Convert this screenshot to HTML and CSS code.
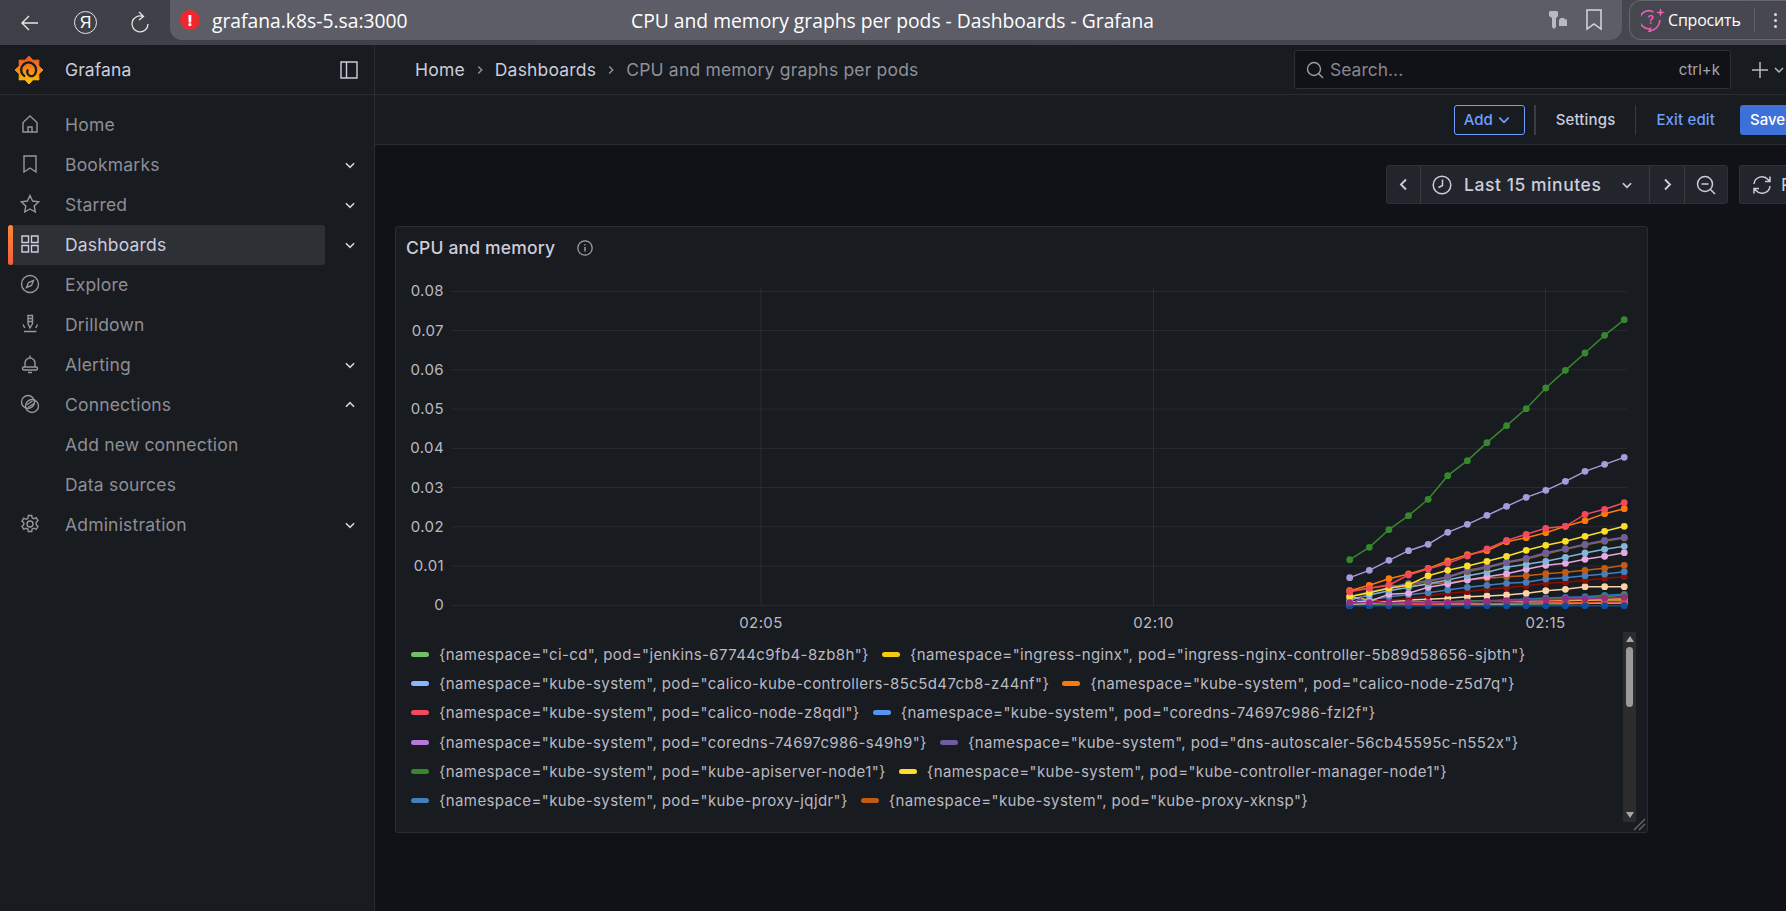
FILE: index.html
```html
<!DOCTYPE html>
<html lang="en">
  <head>
    <meta charset="UTF-8" />
    <title>CPU and memory graphs per pods - Dashboards - Grafana</title>
    <link rel="stylesheet" href="styles.css">
  </head>
  <body>
    <div class="browser-bar">
      <div class="browser-nav">
        <svg class="ic-back" width="22" height="22" viewBox="0 0 22 22"><path d="M19 11H3M10 4l-7 7 7 7" fill="none" stroke="#e6e6ea" stroke-width="1.4"/></svg>
        <span class="ya-mark">Я</span>
        <svg class="ic-reload" width="22" height="24" viewBox="0 0 22 24"><path d="M14 5.500a8 8 0 1 0 5 7.500M10 1l4.500 4.500L10 9" fill="none" stroke="#e6e6ea" stroke-width="1.3"/></svg>
      </div>
      <div class="address-bar">
        <span class="alert-dot">!</span>
        <span class="url">grafana.k8s-5.sa:3000</span>
        <span class="page-title">CPU and memory graphs per pods - Dashboards - Grafana</span>
        <svg class="ic-key" width="20" height="20" viewBox="0 0 20 20"><path d="M1 2.500Q1 1 2.500 1h6Q10 1 10 2.500V6L8 8v9l-2 2-2-2V8L1 6z" fill="#b9bac0"/><path d="M11 10l1.500-2H16l1 1.500h2V16h-8z" fill="#b9bac0"/></svg>
        <svg class="ic-mark" width="18" height="22" viewBox="0 0 18 22"><path d="M2 1h14v19l-7-5-7 5z" fill="none" stroke="#d6d6da" stroke-width="1.5"/></svg>
      </div>
      <div class="ask-box">
        <svg class="ask-icon" width="24" height="24" viewBox="0 0 24 24"><path d="M12.500 4a9 9 0 1 0-3 16.500L8 23.500c6-1.500 10.500-5.500 11-11.500" fill="none" stroke="#e85fb4" stroke-width="1.600"/><text x="6.500" y="16" class="ask-q">?</text><path d="M19.500 0l1.100 3.400 3.400 1.100-3.400 1.100-1.100 3.400-1.100-3.400-3.400-1.100 3.400-1.100z" fill="#e85fb4"/></svg>
        <span class="ask-text">Спросить</span>
        <span class="ask-sep"></span>
        <span class="ask-dots"><i></i><i></i><i></i></span>
      </div>
    </div>

    <div class="app">
      <div class="sidebar">
        <div class="side-head">
          <svg class="logo" width="30" height="30" viewBox="0 0 30 30">
            <defs><linearGradient id="logoGrad" x1="0" y1="0" x2="0" y2="1"><stop offset="0" stop-color="#ee4f27"/><stop offset="1" stop-color="#fcc30b"/></linearGradient></defs>
            <path d="M15 1L19 5.300 24.900 5.100 24.700 11 29 15 24.700 19 24.900 24.900 19 24.700 15 29 11 24.700 5.100 24.900 5.300 19 1 15 5.300 11 5.100 5.100 11 5.300z" fill="url(#logoGrad)" stroke="url(#logoGrad)" stroke-width="1" stroke-linejoin="round"/>
            <path d="M11 21.500a7.500 7.500 0 1 1 10.500-3.500 4.200 4.200 0 1 1-7.500-3.500" fill="none" stroke="#181b1f" stroke-width="2.300"/>
          </svg>
          <span class="brand">Grafana</span>
          <svg class="dock" width="18" height="18" viewBox="0 0 18 18"><path d="M1 1h16v16H1zM6.500 1v16" fill="none" stroke="#ccccdc" stroke-width="1.400"/></svg>
        </div>
        <div class="nav">
          <div class="nav-row"><a class="nav-link"><svg class="ni" viewBox="0 0 20 20"><path d="M3 18V8.500L10 2l7 6.500V18zM8 18v-5h4v5"/></svg>Home</a></div>
          <div class="nav-row"><a class="nav-link"><svg class="ni" viewBox="0 0 20 20"><path d="M4 2h12v16l-6-4-6 4z"/></svg>Bookmarks</a><svg class="chev" viewBox="0 0 12 12"><path d="M2.500 4.500L6 8l3.500-3.500"/></svg></div>
          <div class="nav-row"><a class="nav-link"><svg class="ni" viewBox="0 0 20 20"><path d="M10 1.500l2.600 5.500 6 .8-4.400 4.200 1.100 6L10 15l-5.300 3 1.100-6L1.400 7.800l6-.8z"/></svg>Starred</a><svg class="chev" viewBox="0 0 12 12"><path d="M2.500 4.500L6 8l3.500-3.500"/></svg></div>
          <div class="nav-row"><a class="nav-link active"><svg class="ni" viewBox="0 0 20 20"><path d="M2 2h6.500v6.500H2zM11.500 2H18v6.500h-6.500zM2 11.500h6.500V18H2zM11.500 11.500H18V18h-6.500z"/></svg>Dashboards</a><svg class="chev" viewBox="0 0 12 12"><path d="M2.500 4.500L6 8l3.500-3.500"/></svg></div>
          <div class="nav-row"><a class="nav-link"><svg class="ni" viewBox="0 0 20 20"><circle cx="10" cy="10" r="8.500"/><path d="M13.500 6.500l-2 5-5 2 2-5z"/></svg>Explore</a></div>
          <div class="nav-row"><a class="nav-link"><svg class="ni" viewBox="0 0 20 20"><path d="M8 1.500h4.500v8L10 14 8 9.500zM8 4.500h4.500M8 7.500h4.500M3 10.500l1.800 3.500M17.500 10.500L15.700 14M4 17.500h12.500"/></svg>Drilldown</a></div>
          <div class="nav-row"><a class="nav-link"><svg class="ni" viewBox="0 0 20 20"><path d="M10 1.500v2M5 9a5 5 0 0 1 10 0v4H5zM5 13H4a1.500 1.500 0 0 0 0 3h12a1.500 1.500 0 0 0 0-3h-1M8 18.500h4"/></svg>Alerting</a><svg class="chev" viewBox="0 0 12 12"><path d="M2.500 4.500L6 8l3.500-3.500"/></svg></div>
          <div class="nav-row"><a class="nav-link"><svg class="ni" viewBox="0 0 20 20"><circle cx="8" cy="8" r="6.500"/><circle cx="12" cy="12" r="6.500"/><path d="M6.500 11l6-4M8 13.500l6-4"/></svg>Connections</a><svg class="chev" viewBox="0 0 12 12"><path d="M2.500 7.500L6 4l3.500 3.500"/></svg></div>
          <div class="nav-row"><a class="nav-link nav-sub">Add new connection</a></div>
          <div class="nav-row"><a class="nav-link nav-sub">Data sources</a></div>
          <div class="nav-row"><a class="nav-link"><svg class="ni" viewBox="0 0 20 20"><circle cx="10" cy="10" r="3"/><path d="M8.300 1.500h3.400l.5 2.500 1.700.8 2.300-1.100 1.800 2.900-1.800 1.700v2.400l1.800 1.700-1.800 2.900-2.300-1.100-1.700.8-.5 2.500H8.300l-.5-2.500-1.700-.8-2.300 1.100-1.800-2.900 1.800-1.700V8.800L2 7.100l1.800-2.900 2.300 1.100 1.700-.8z"/></svg>Administration</a><svg class="chev" viewBox="0 0 12 12"><path d="M2.500 4.500L6 8l3.500-3.500"/></svg></div>
        </div>
      </div>

      <div class="main">
        <div class="topbar">
          <div class="crumbs">
            <span>Home</span><svg class="crumb-sep" viewBox="0 0 12 12"><path d="M4.500 3l3 3-3 3"/></svg>
            <span>Dashboards</span><svg class="crumb-sep" viewBox="0 0 12 12"><path d="M4.500 3l3 3-3 3"/></svg>
            <span class="crumb-last">CPU and memory graphs per pods</span>
          </div>
          <div class="search">
            <svg width="18" height="18" viewBox="0 0 18 18"><circle cx="8" cy="8" r="6.500" fill="none" stroke="#9a9ba3" stroke-width="1.400"/><path d="M12.500 12.500L17 17" stroke="#9a9ba3" stroke-width="1.400"/></svg>
            <span class="search-text">Search...</span>
            <span class="search-key">ctrl+k</span>
          </div>
          <div class="plus-box">
            <svg width="16" height="16" viewBox="0 0 16 16"><path d="M8 0v16M0 8h16" stroke="#b9bac4" stroke-width="1.500"/></svg>
            <svg class="plus-chev" viewBox="0 0 12 12"><path d="M2 4l4 4 4-4"/></svg>
          </div>
        </div>

        <div class="toolbar">
          <button class="btn-add">Add<svg viewBox="0 0 12 12"><path d="M2 4l4 4 4-4"/></svg></button>
          <span class="tool-sep tool-sep-wide"></span>
          <span class="tool-link">Settings</span>
          <span class="tool-sep"></span>
          <span class="tool-link tool-blue">Exit edit</span>
          <button class="btn-save">Save</button>
        </div>

        <div class="content">
          <div class="timebar">
            <div class="time-group">
              <span class="time-cell time-narrow"><svg class="time-chev" viewBox="0 0 12 12"><path d="M8 2L4 6l4 4"/></svg></span>
              <span class="time-cell time-range">
                <svg width="20" height="20" viewBox="0 0 20 20"><circle cx="10" cy="10" r="8.800" fill="none" stroke="#ccccdc" stroke-width="1.500"/><path d="M10.500 4.500V10.500L6.500 12.500" fill="none" stroke="#ccccdc" stroke-width="1.500"/></svg>
                <span class="time-text">Last 15 minutes</span>
                <svg class="time-chev time-down" viewBox="0 0 12 12"><path d="M2.500 4.500L6 8l3.500-3.500"/></svg>
              </span>
              <span class="time-cell time-next"><svg class="time-chev" viewBox="0 0 12 12"><path d="M4 2l4 4-4 4"/></svg></span>
              <span class="time-cell time-zoom"><svg width="20" height="20" viewBox="0 0 20 20"><circle cx="9" cy="9" r="7.500" fill="none" stroke="#ccccdc" stroke-width="1.500"/><path d="M14.500 14.500L19 19M5.500 9h7" stroke="#ccccdc" stroke-width="1.500"/></svg></span>
            </div>
            <div class="refresh">
              <svg width="20" height="20" viewBox="0 0 20 20"><path d="M2 9a8 8 0 0 1 14-4.500L18 6.500M18 1.500v5h-5M18 11a8 8 0 0 1-14 4.500L2 13.500M2 18.500v-5h5" fill="none" stroke="#ccccdc" stroke-width="1.500"/></svg>
              <span>Refresh</span>
            </div>
          </div>

          <div class="panel">
            <div class="panel-head">
              <span class="panel-title">CPU and memory</span>
              <svg width="16" height="16" viewBox="0 0 16 16"><circle cx="8" cy="8" r="7.200" fill="none" stroke="#a5a6ae" stroke-width="1.200"/><path d="M8 7v4.500M8 4.200v1.300" stroke="#a5a6ae" stroke-width="1.400"/></svg>
            </div>
            <svg id="chart" class="chart" viewBox="396 268 1251 362" width="1251" height="362"></svg>
            <div class="legend-wrap">
              <div class="legend">
                <div class="leg"><i class="sw" style="background:#73bf69"></i>{namespace="ci-cd", pod="jenkins-67744c9fb4-8zb8h"}</div>
                <div class="leg"><i class="sw" style="background:#f2cc0c"></i>{namespace="ingress-nginx", pod="ingress-nginx-controller-5b89d58656-sjbth"}</div>
                <div class="leg"><i class="sw" style="background:#8ab8ff"></i>{namespace="kube-system", pod="calico-kube-controllers-85c5d47cb8-z44nf"}</div>
                <div class="leg"><i class="sw" style="background:#ff780a"></i>{namespace="kube-system", pod="calico-node-z5d7q"}</div>
                <div class="leg"><i class="sw" style="background:#f2495c"></i>{namespace="kube-system", pod="calico-node-z8qdl"}</div>
                <div class="leg"><i class="sw" style="background:#5794f2"></i>{namespace="kube-system", pod="coredns-74697c986-fzl2f"}</div>
                <div class="leg"><i class="sw" style="background:#b877d9"></i>{namespace="kube-system", pod="coredns-74697c986-s49h9"}</div>
                <div class="leg"><i class="sw" style="background:#705da0"></i>{namespace="kube-system", pod="dns-autoscaler-56cb45595c-n552x"}</div>
                <div class="leg"><i class="sw" style="background:#37872d"></i>{namespace="kube-system", pod="kube-apiserver-node1"}</div>
                <div class="leg"><i class="sw" style="background:#fade2a"></i>{namespace="kube-system", pod="kube-controller-manager-node1"}</div>
                <div class="leg"><i class="sw" style="background:#447ebc"></i>{namespace="kube-system", pod="kube-proxy-jqjdr"}</div>
                <div class="leg"><i class="sw" style="background:#c15c17"></i>{namespace="kube-system", pod="kube-proxy-xknsp"}</div>
              </div>
              <div class="legend-scroll">
                <span class="arrow-up"></span>
                <span class="thumb"></span>
                <span class="arrow-down"></span>
              </div>
            </div>
            <svg class="resize" width="13" height="13" viewBox="0 0 13 13"><path d="M1 12L12 1M6 12l6-6" stroke="#6a6b72" stroke-width="1.200"/></svg>
          </div>
        </div>
      </div>
    </div>
    <script src="chart.js"></script>
  </body>
</html>
```

FILE: styles.css
```css
* {
  box-sizing: border-box;
}

html,
body {
  margin: 0px;
  height: 100%;
  overflow: hidden;
  background-color: #111217;
  font-family: Inter, "Noto Sans", sans-serif;
  color: #ccccdc;
}

/* browser chrome */
.browser-bar {
  display: flex;
  height: 45px;
  background: linear-gradient(90deg, #3f4047, #46474f);
  color: #fff;
}

.browser-nav {
  display: flex;
  align-items: center;
  width: 170px;
  padding-left: 19px;
}

.ic-reload {
  margin-left: 32px;
}

.ya-mark {
  display: flex;
  align-items: center;
  justify-content: center;
  width: 23px;
  height: 23px;
  margin-left: 33px;
  border: 1.4px solid #e6e6ea;
  border-radius: 50%;
  font-size: 16px;
  font-family: "Liberation Sans", sans-serif;
}

.address-bar {
  position: relative;
  display: flex;
  align-items: center;
  width: 1452px;
  height: 40px;
  padding-left: 10px;
  background-color: #5c5d66;
  border-radius: 0px 0px 12px 12px;
}

.alert-dot {
  display: flex;
  align-items: center;
  justify-content: center;
  width: 20px;
  height: 20px;
  background-color: #f0282d;
  border-radius: 50%;
  font-size: 15px;
  font-weight: 800;
  color: #fff;
}

.url {
  margin-left: 12px;
  font-family: "Open Sans", sans-serif;
  font-size: 19.3px;
}

.page-title {
  position: absolute;
  left: 461px;
  font-family: "Open Sans", sans-serif;
  font-size: 19.3px;
}

.ic-key {
  margin-left: auto;
}

.ic-mark {
  margin-left: 17px;
  margin-right: 19px;
}

.ask-box {
  display: flex;
  align-items: center;
  flex: 1;
  height: 40px;
  margin-left: 7px;
  padding-left: 11px;
  border: 1px solid #65666e;
  border-right: 0px;
  border-radius: 12px 0px 0px 12px;
}

.ask-q {
  font-family: Inter, sans-serif;
  font-size: 12px;
  font-weight: 600;
  fill: #e85fb4;
}

.ask-text {
  margin-left: 3px;
  font-family: "Open Sans", sans-serif;
  font-size: 16px;
  letter-spacing: -0.2px;
}

.ask-sep {
  width: 1px;
  height: 24px;
  margin-left: 13px;
  background-color: #5f6068;
}

.ask-dots {
  display: flex;
  flex-direction: column;
  gap: 3px;
  margin-left: 19px;
}

.ask-dots i {
  width: 3px;
  height: 3px;
  background-color: #dcdce0;
  border-radius: 50%;
}

/* grafana shell */
.app {
  display: flex;
  height: 866px;
}

.sidebar {
  width: 375px;
  flex-shrink: 0;
  background-color: #181b1f;
  border-right: 1px solid #2a2c32;
}

.side-head {
  display: flex;
  align-items: center;
  height: 50px;
  padding-left: 14px;
  border-bottom: 1px solid #2a2c32;
}

.brand {
  margin-left: 21px;
  font-size: 17.5px;
  letter-spacing: 0.1px;
}

.dock {
  margin-left: auto;
  margin-right: 16px;
}

.nav {
  padding-top: 10px;
}

.nav-row {
  display: flex;
  align-items: center;
  height: 40px;
  padding-left: 8px;
}

.nav-link {
  position: relative;
  display: flex;
  align-items: center;
  gap: 25px;
  width: 317px;
  height: 40px;
  padding-left: 12px;
  padding-bottom: 2px;
  font-size: 17.5px;
  letter-spacing: 0.19px;
  color: #8d8e96;
}

.nav-link.active {
  background-color: #2d3035;
  border-radius: 3px;
  color: #ccccdc;
}

.nav-link.active::before {
  content: "";
  position: absolute;
  left: 0px;
  top: 0px;
  width: 5px;
  height: 40px;
  background: linear-gradient(0deg, #f55f3e, #ff8833);
  border-radius: 3px;
}

.nav-sub {
  padding-left: 57px;
}

.ni {
  width: 20px;
  height: 20px;
  flex-shrink: 0;
  fill: none;
  stroke: #9597a0;
  stroke-width: 1.4;
}

.active .ni {
  stroke: #ccccdc;
}

.chev {
  width: 14px;
  height: 14px;
  margin-left: 18px;
  fill: none;
  stroke: #ccccdc;
  stroke-width: 1.500;
}

.main {
  flex: 1;
  min-width: 0;
  overflow: hidden;
}

.topbar {
  display: flex;
  align-items: center;
  height: 50px;
  padding-left: 40px;
  background-color: #181b1f;
  border-bottom: 1px solid #2a2c32;
}

.crumbs {
  display: flex;
  align-items: center;
  font-size: 17.5px;
  letter-spacing: 0.19px;
}

.crumb-sep {
  width: 14px;
  height: 14px;
  margin: 0px 8px;
  fill: none;
  stroke: #8d8e96;
  stroke-width: 1.300;
}

.crumb-last {
  color: #8f9098;
}

.search {
  display: flex;
  align-items: center;
  width: 437px;
  height: 39px;
  margin-left: auto;
  padding: 0px 10px 0px 11px;
  background-color: #111217;
  border: 1px solid #2e3037;
  border-radius: 3px;
}

.search-text {
  margin-left: 6px;
  font-size: 17.5px;
  color: #85868e;
}

.search-key {
  margin-left: auto;
  font-size: 15px;
  color: #a5a6ae;
}

.plus-box {
  display: flex;
  align-items: center;
  width: 55px;
  padding-left: 21px;
}

.plus-chev {
  width: 12px;
  height: 12px;
  margin-left: 5px;
  fill: none;
  stroke: #b9bac4;
  stroke-width: 1.400;
}

.toolbar {
  display: flex;
  align-items: center;
  justify-content: flex-end;
  height: 50px;
  background-color: #181b1f;
  border-bottom: 1px solid #2a2c32;
  font-size: 15px;
  font-weight: 500;
  letter-spacing: 0.15px;
}

.btn-add {
  display: flex;
  align-items: center;
  gap: 4px;
  width: 71px;
  height: 30px;
  padding-left: 9px;
  background: none;
  border: 1px solid #6e9fff;
  border-radius: 3px;
  font-family: inherit;
  font-size: 15px;
  font-weight: 500;
  color: #6e9fff;
}

.btn-add svg {
  width: 14px;
  height: 14px;
  fill: none;
  stroke: #6e9fff;
  stroke-width: 1.500;
}

.tool-sep {
  width: 1px;
  height: 30px;
  margin: 0px 20px;
  background-color: #3a3c42;
}

.tool-sep-wide {
  width: 2px;
  margin: 0px 20px 0px 9px;
}

.tool-blue {
  color: #6e9fff;
}

.btn-save {
  width: 46px;
  height: 30px;
  margin-left: 25px;
  padding: 0px 0px 0px 10px;
  background-color: #3d71d9;
  border: none;
  border-radius: 3px 0px 0px 3px;
  font-family: inherit;
  font-size: 15px;
  font-weight: 500;
  color: #fff;
  text-align: left;
  overflow: hidden;
}

.content {
  padding-top: 20px;
}

.timebar {
  display: flex;
  height: 39px;
  padding-left: 1011px;
}

.time-group {
  display: flex;
  width: 342px;
  background-color: #22252b;
  border: 1px solid #2e3037;
  border-radius: 3px;
}

.time-cell {
  display: flex;
  align-items: center;
  justify-content: center;
  border-right: 1px solid #3a3c42;
}

.time-narrow {
  width: 34px;
}

.time-range {
  width: 229px;
  justify-content: flex-start;
  padding-left: 11px;
}

.time-next {
  width: 35px;
}

.time-zoom {
  width: 42px;
  border-right: 0px;
}

.time-text {
  margin-left: 12px;
  font-size: 17.5px;
  font-weight: 500;
  letter-spacing: 0.55px;
}

.time-chev {
  width: 15px;
  height: 15px;
  fill: none;
  stroke: #ccccdc;
  stroke-width: 1.500;
}

.time-down {
  margin-left: 19px;
  width: 14px;
  height: 14px;
}

.refresh {
  display: flex;
  align-items: center;
  gap: 9px;
  width: 48px;
  margin-left: 11px;
  padding-left: 12px;
  background-color: #22252b;
  border: 1px solid #2e3037;
  border-right: 0px;
  border-radius: 3px 0px 0px 3px;
  font-size: 17.5px;
  overflow: hidden;
  flex-shrink: 0;
}

.refresh svg {
  flex-shrink: 0;
}

.panel {
  position: relative;
  width: 1253px;
  height: 607px;
  margin-top: 22px;
  margin-left: 20px;
  background-color: #181b1f;
  border: 1px solid #2a2c32;
  border-radius: 3px;
}

.panel-head {
  display: flex;
  align-items: center;
  gap: 22px;
  height: 41px;
  padding-left: 10px;
}

.panel-title {
  font-size: 17.5px;
  font-weight: 500;
  letter-spacing: 0.18px;
}

.chart {
  display: block;
}

.axis-text {
  font-family: Inter, sans-serif;
  font-size: 15px;
  letter-spacing: 0.4px;
  fill: #b9bac4;
}

.legend-wrap {
  display: flex;
  height: 190px;
  margin-top: 2px;
}

.legend {
  display: flex;
  flex-wrap: wrap;
  align-content: flex-start;
  column-gap: 13px;
  width: 1227px;
  padding-top: 8px;
  padding-left: 15px;
}

.leg {
  display: flex;
  align-items: center;
  height: 29.2px;
  font-size: 15px;
  letter-spacing: 0.39px;
  color: #b9bac4;
  white-space: nowrap;
}

.sw {
  width: 18px;
  height: 5px;
  margin-right: 10px;
  border-radius: 3px;
}

.legend-scroll {
  display: flex;
  flex-direction: column;
  align-items: center;
  width: 13px;
  background-color: #2c2c2c;
}

.arrow-up,
.arrow-down {
  width: 0px;
  height: 0px;
  border-left: 4.500px solid transparent;
  border-right: 4.500px solid transparent;
}

.arrow-up {
  margin-top: 4px;
  border-bottom: 6px solid #a8a8a8;
}

.arrow-down {
  margin-top: 105px;
  border-top: 6px solid #a8a8a8;
}

.thumb {
  width: 7px;
  height: 60px;
  margin-top: 5px;
  background-color: #9b9b9b;
  border-radius: 4px;
}

.resize {
  position: absolute;
  right: 1px;
  bottom: 1px;
}
```

FILE: chart.js
```js
// values are y pixels read off a 3x crop starting at y=400
const xs = [];
for (let i = 0; i < 15; i++) xs.push(1349.7 + i * 19.61);

const series = [
  ["#7eb26d", [616,616,615,615,614,614,613,613,612,612,611,611,610,610,609]],
  ["#eab839", [590,600,606,606,605,605,604,604,603,603,602,602,601,600,600]],
  ["#6ed0e0", [616,615,614,613,613,612,612,611,611,610,610,609,609,608,608]],
  ["#ef843c", [614,612,610,609,608,606,605,604,603,602,601,600,598,597,596]],
  ["#e24d42", [616,615,614,614,613,612,612,611,610,610,609,608,608,607,606]],
  ["#1f78c1", [615,614,612,610,608,606,604,602,600,597,594,592,590,586,583]],
  ["#508642", [616,615,613,610,608,606,604,603,602,600,598,596,594,590,586]],
  ["#fcd2a6", [612,610,605,600,598,595,590,588,585,580,572,568,560,560,560]],
  ["#890f02", [610,605,600,598,587,580,575,568,563,557,550,547,541,535,530]],
  ["#447ebc", [610,600,590,584,578,570,562,556,550,547,537,533,527,522,515]],
  ["#c15c17", [572,565,556,560,552,548,540,535,530,527,521,517,511,505,496]],
  ["#e5a8e2", [605,604,583,580,562,552,540,530,521,508,496,490,478,469,458]],
  ["#82b5d8", [600,585,572,562,551,540,527,517,502,493,484,472,459,448,439]],
  ["#7c6a2e", [590,575,565,556,545,532,515,503,488,478,462,448,435,424,414]],
  ["#705da0", [617,577,563,550,542,530,511,500,486,475,458,446,433,421,412]],
  ["#fade2a", [590,578,565,555,527,511,498,484,469,451,436,424,409,394,379]],
  ["#ff780a", [572,556,536,522,505,483,464,452,425,413,398,379,362,341,326]],
  ["#f2495c", [575,565,555,525,507,490,468,447,421,403,385,379,343,328,308]],
  ["#a79bdb", [533,511,481,452,433,397,373,346,319,292,271,244,214,193,172]],
  ["#37872d", [479,442,389,347,298,227,182,128,77,26,-36,-89,-141,-194,-241]],
  ["#0a50a1", [617,617,617,617,617,617,617,617,617,617,617,617,617,617,617]],
  ["#962d82", [608,608,608,607,607,607,606,604,602,600,599,597,596,594,592]],
];

const ns = "http://www.w3.org/2000/svg";
const chart = document.getElementById("chart");

function add(tag, attrs, text) {
  const el = document.createElementNS(ns, tag);
  for (const k in attrs) el.setAttribute(k, attrs[k]);
  if (text) el.textContent = text;
  chart.appendChild(el);
}

// horizontal grid and y axis
for (let i = 0; i <= 8; i++) {
  const y = 605.3 - i * 39.25;
  add("line", { x1: 451, x2: 1627, y1: y, y2: y, stroke: "#2a2c31" });
  const label = i == 0 ? "0" : "0.0" + i;
  add("text", { x: 444, y: y + 5, "text-anchor": "end", class: "axis-text" }, label);
}

// vertical grid and x axis
[[761, "02:05"], [1153.5, "02:10"], [1545.5, "02:15"]].forEach(function (t) {
  add("line", { x1: t[0], x2: t[0], y1: 288, y2: 605, stroke: "#2a2c31" });
  add("text", { x: t[0], y: 628, "text-anchor": "middle", class: "axis-text" }, t[1]);
});

series.forEach(function (s) {
  const pts = s[1].map(function (v, i) {
    return [xs[i], 400 + v / 3];
  });
  add("polyline", {
    points: pts.map((p) => p.join(",")).join(" "),
    fill: "none",
    stroke: s[0],
    "stroke-width": 1.5,
  });
  pts.forEach(function (p) {
    add("circle", { cx: p[0], cy: p[1], r: 3.4, fill: s[0] });
  });
});
```
